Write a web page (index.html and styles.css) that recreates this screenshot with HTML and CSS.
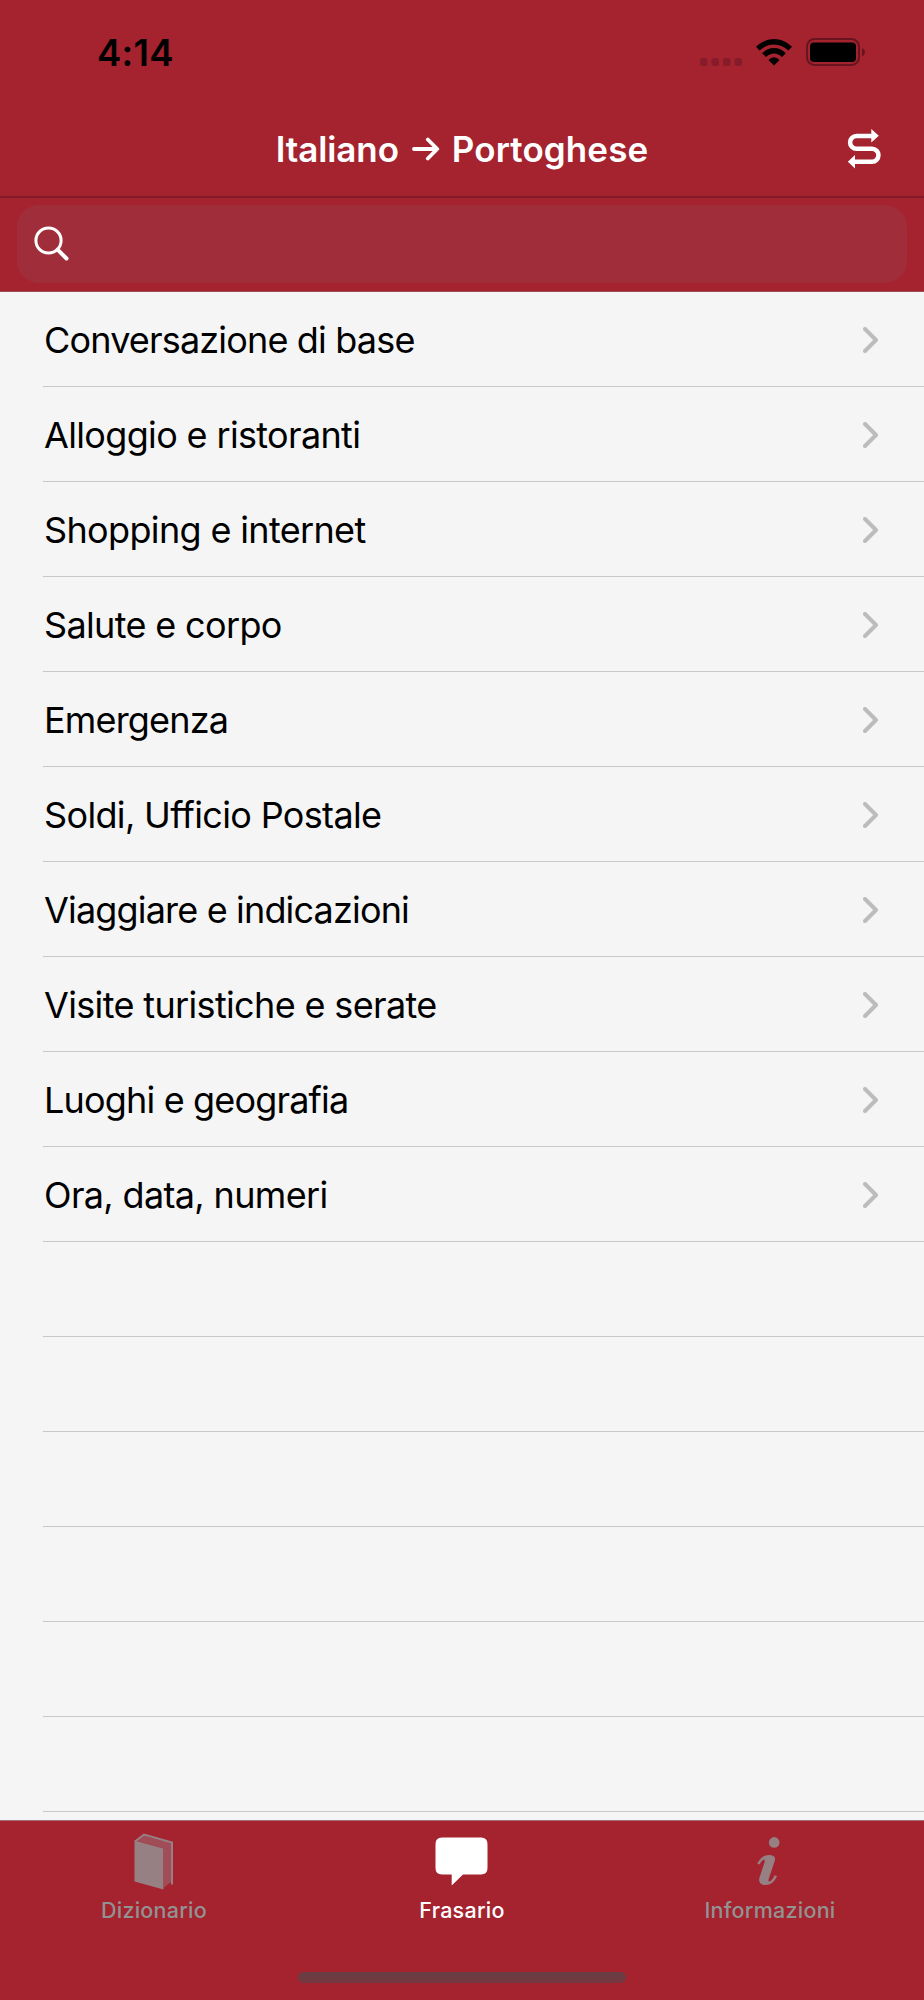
FILE: index.html
```html
<!DOCTYPE html>
<html lang="it">
<head>
    <meta charset="UTF-8">
    <meta name="viewport" content="width=device-width, initial-scale=1.0">
    <title>Frasario</title>
    <link rel="stylesheet" href="styles.css">
</head>
<body>
    <div class="status-bar">
        <span class="time">4:14</span>
        <div class="status-icons">
            <svg class="dots" width="42" height="8" viewBox="0 0 42 8">
                <rect x="0" y="0" width="7.5" height="8" rx="2.5"/>
                <rect x="11.5" y="0" width="7.5" height="8" rx="2.5"/>
                <rect x="23" y="0" width="7.5" height="8" rx="2.5"/>
                <rect x="34.5" y="0" width="7.5" height="8" rx="2.5"/>
            </svg>
            <svg class="wifi" width="36" height="27" viewBox="0 0 36 27">
                <path d="M0 7.8Q8 0 18 0T36 7.8L32.4 11.5Q26 5.4 18 5.4T3.6 11.5Z"/>
                <path d="M6.2 14.2Q11.4 9 18 9T29.8 14.2L26 18Q22.5 14.5 18 14.5T10 18Z"/>
                <path d="M12.5 21Q15 18.3 18 18.3T23.5 21L18 26.6Z"/>
            </svg>
            <svg class="battery" width="60" height="28" viewBox="0 0 60 28">
                <rect class="battery-case" x="1" y="1" width="52" height="26" rx="7.5"/>
                <rect x="4" y="4.5" width="46" height="19.5" rx="4"/>
                <path class="battery-cap" d="M56 10Q59 11.5 59 14.2T56 18.5Z"/>
            </svg>
        </div>
    </div>

    <div class="nav-bar">
        <h1 class="title">
            <span>Italiano</span>
            <svg width="28" height="24" viewBox="0 0 28 24">
                <path d="M2 12H25M15.8 2.5L25.3 12L15.8 21.5"/>
            </svg>
            <span class="title-to">Portoghese</span>
        </h1>
        <svg class="swap" width="36" height="40" viewBox="0 0 36 40">
            <path class="swap-line" d="M26 7H10.5A6.3 6.3 0 0 0 10.5 19.8H26A6.3 6.3 0 0 1 26 32.7H9"/>
            <path class="swap-head" d="M25.3 0L32.8 6.8L25.3 13.6ZM9 26L1.8 32.7L9 39.6Z"/>
        </svg>
    </div>

    <div class="search-bar">
        <div class="search-field">
            <svg width="36" height="36" viewBox="0 0 36 36">
                <circle cx="14.5" cy="14.5" r="12.6"/>
                <path d="M23.6 23.6L32.5 32.5"/>
            </svg>
        </div>
    </div>

    <ul class="list">
        <li><span class="tight">Conversazione di base</span><svg viewBox="0 0 16 26"><path d="M2 2L13 13L2 24"/></svg></li>
        <li><span>Alloggio e ristoranti</span><svg viewBox="0 0 16 26"><path d="M2 2L13 13L2 24"/></svg></li>
        <li><span>Shopping e internet</span><svg viewBox="0 0 16 26"><path d="M2 2L13 13L2 24"/></svg></li>
        <li><span>Salute e corpo</span><svg viewBox="0 0 16 26"><path d="M2 2L13 13L2 24"/></svg></li>
        <li><span class="tight">Emergenza</span><svg viewBox="0 0 16 26"><path d="M2 2L13 13L2 24"/></svg></li>
        <li><span>Soldi, Ufficio Postale</span><svg viewBox="0 0 16 26"><path d="M2 2L13 13L2 24"/></svg></li>
        <li><span class="tight">Viaggiare e indicazioni</span><svg viewBox="0 0 16 26"><path d="M2 2L13 13L2 24"/></svg></li>
        <li><span>Visite turistiche e serate</span><svg viewBox="0 0 16 26"><path d="M2 2L13 13L2 24"/></svg></li>
        <li><span class="tight">Luoghi e geografia</span><svg viewBox="0 0 16 26"><path d="M2 2L13 13L2 24"/></svg></li>
        <li><span>Ora, data, numeri</span><svg viewBox="0 0 16 26"><path d="M2 2L13 13L2 24"/></svg></li>
        <li></li>
        <li></li>
        <li></li>
        <li></li>
        <li></li>
        <li></li>
    </ul>

    <div class="tab-bar">
        <div class="tabs">
            <div class="tab">
                <svg width="40" height="57" viewBox="0 0 40 57">
                    <path class="page" d="M3.5 8L9.5 2.5L37 10V49L30 54.5V15.5Z"/>
                    <path d="M0.5 7.5L29.5 15.5V56.5L0.5 48.5Z"/>
                    <path class="cover" d="M1 8.5L10 1.5L38 9.5V51.5"/>
                </svg>
                <span>Dizionario</span>
            </div>
            <div class="tab active">
                <svg width="55" height="57" viewBox="0 0 55 57">
                    <path d="M7 4.5H46Q52.5 4.5 52.5 11V35Q52.5 41.5 46 41.5H28L16.7 52.5V41.5H7Q0.5 41.5 0.5 35V11Q0.5 4.5 7 4.5Z"/>
                </svg>
                <span>Frasario</span>
            </div>
            <div class="tab">
                <svg width="28" height="57" viewBox="0 0 28 57">
                    <circle cx="18.2" cy="9.4" r="5.3"/>
                    <path d="M1.2 30.5C4.5 24 9 22 13 22C18 22 20 24 18.7 28L12.5 46.5C12 48.5 13.2 49 14.5 48C16 47 17.5 45 18.5 42.3L21 43C18.5 49 14.5 52 9.5 52C4 52 2.2 49 3.5 44.5L8.5 29.5C9.2 27 8.5 26.3 7 27.3C5.5 28.3 4.5 29.5 3.7 31.5Z"/>
                </svg>
                <span>Informazioni</span>
            </div>
        </div>
        <div class="home-indicator"></div>
    </div>
</body>
</html>
```
FILE: styles.css
```css
* {
    box-sizing: border-box;
}
body {
    margin: 0;
    height: 2000px;
    display: flex;
    flex-direction: column;
    font-family: Inter, "Liberation Sans", sans-serif;
    background: #f5f5f5;
    color: #000;
    overflow: hidden;
}
svg {
    display: block;
    flex: none;
}

/* header */
.status-bar {
    height: 103px;
    padding: 0 58px 0 97px;
    display: flex;
    justify-content: space-between;
    align-items: center;
    background: #a5222f;
}
.time {
    padding-top: 2px;
    font-size: 36.5px;
    font-weight: 600;
    letter-spacing: 0.3px;
}
.status-icons {
    display: flex;
    align-items: flex-end;
    padding-top: 1px;
}
.dots {
    fill: #861c2a;
    margin-right: 14px;
}
.wifi {
    margin-right: 14px;
}
.battery-case {
    fill: none;
    stroke: #68141f;
    stroke-width: 2;
}
.battery-cap {
    fill: #68141f;
}
.nav-bar {
    height: 95px;
    padding-bottom: 2px;
    display: grid;
    grid-template-columns: 1fr auto 1fr;
    align-items: center;
    background: #a5222f;
    border-bottom: 2px solid #831a29;
}
.title {
    grid-column: 2;
    margin: 0;
    display: flex;
    align-items: center;
    font-size: 35px;
    font-weight: 600;
    letter-spacing: -0.1px;
    color: #fff;
}
.title-to {
    letter-spacing: 0.1px;
}
.title svg {
    margin: 0 12px 0 13px;
    fill: none;
    stroke: #fff;
    stroke-width: 3.8;
    stroke-linecap: round;
    stroke-linejoin: round;
}
.swap {
    justify-self: end;
    margin-right: 42px;
}
.swap-line {
    fill: none;
    stroke: #fff;
    stroke-width: 4.5;
}
.swap-head {
    fill: #fff;
}
.search-bar {
    height: 94px;
    padding: 7px 17px 8px;
    background: #a5222f;
    border-bottom: 1px solid #a04a55;
}
.search-field {
    height: 78px;
    padding-left: 17px;
    display: flex;
    align-items: center;
    background: #a02e3a;
    border-radius: 22px;
}
.search-field svg {
    fill: none;
    stroke: #fff;
    stroke-width: 3;
    stroke-linecap: round;
}
.search-field path {
    stroke-width: 4;
}

/* phrase categories */
.list {
    flex: 1;
    margin: 0;
    padding: 0 0 0 43px;
    list-style: none;
    overflow: hidden;
}
.list li {
    height: 95px;
    padding: 1px 45px 0 1px;
    display: flex;
    justify-content: space-between;
    align-items: center;
    position: relative;
    border-bottom: 1px solid #c8c8ca;
    font-size: 36px;
    letter-spacing: -0.65px;
}
.list span {
    padding-top: 1px;
}
.list .tight {
    letter-spacing: -0.83px;
}
.list svg {
    width: 16px;
    height: 26px;
    fill: none;
    stroke: #bcbcbe;
    stroke-width: 4;
    stroke-linecap: round;
    stroke-linejoin: round;
}

/* bottom tabs */
.tab-bar {
    height: 180px;
    display: flex;
    flex-direction: column;
    justify-content: space-between;
    align-items: center;
    background: #a5222f;
    border-top: 1px solid #a07078;
}
.tabs {
    width: 100%;
    display: grid;
    grid-template-columns: repeat(3, 1fr);
    padding-top: 12px;
}
.tab {
    display: flex;
    flex-direction: column;
    align-items: center;
    font-size: 21.5px;
    font-weight: 500;
    letter-spacing: 0.25px;
    color: #929292;
}
.tab svg {
    fill: #968084;
}
.tab span {
    margin-top: 7px;
}
.tab .page {
    fill: #a04d57;
}
.tab .cover {
    fill: none;
    stroke: #968084;
    stroke-width: 2;
}
.tab.active {
    color: #fff;
}
.tab.active svg {
    fill: #fff;
}
.home-indicator {
    width: 328px;
    height: 11px;
    margin-bottom: 17px;
    border-radius: 6px;
    background: linear-gradient(#663f44, #75373e);
}
```
